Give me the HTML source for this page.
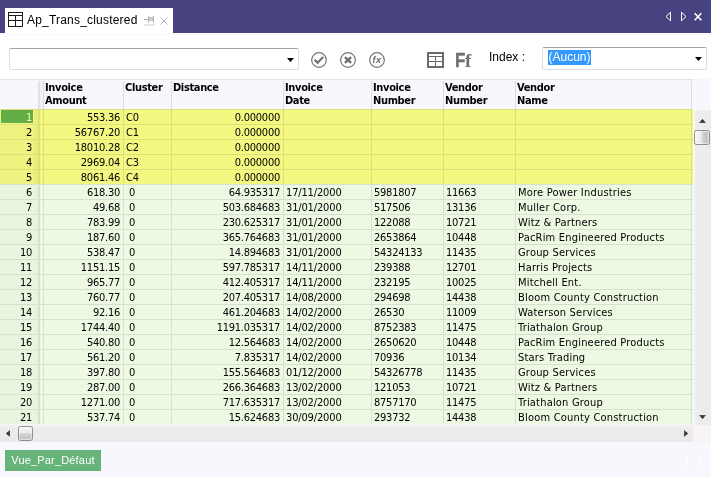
<!DOCTYPE html>
<html><head><meta charset="utf-8"><title>Ap_Trans_clustered</title>
<style>
html,body{margin:0;padding:0;}
body{will-change:transform;width:711px;height:477px;overflow:hidden;background:#fff;position:relative;font-family:"DejaVu Sans Condensed","DejaVu Sans","Liberation Sans",sans-serif;font-size:11px;color:#000;}
svg{position:absolute;overflow:visible;}
#top{position:absolute;left:0;top:0;width:711px;height:33px;background:#474381;}
#tab{position:absolute;left:5px;top:8px;width:168px;height:25px;background:#fff;}
#tab .t{will-change:transform;position:absolute;left:22px;top:5px;font:12px "Liberation Sans",sans-serif;color:#000;white-space:nowrap;letter-spacing:0.2px;}
#tline{position:absolute;left:0;top:34px;width:711px;height:1px;background:#f7f7fa;}
#combo{position:absolute;left:9px;top:48px;width:288px;height:20px;border:1px solid #dcdcea;border-top-color:#a4a4b0;border-radius:2px;background:#fff;}
#idx{position:absolute;left:489px;top:50px;font:12px "Liberation Sans",sans-serif;color:#000;white-space:nowrap;}
#sel{position:absolute;left:542px;top:47px;width:163px;height:21px;border:1px solid #dcdcea;border-top-color:#a4a4b0;border-radius:2px;background:#fff;}
#sel span{opacity:0.999;position:absolute;left:5px;top:2px;width:43px;background:#3399ff;color:#fff;font:12px "Liberation Sans",sans-serif;height:15px;line-height:15px;text-align:center;white-space:nowrap;}
#hdr{position:absolute;left:0;top:79px;width:711px;height:30px;background:#f7f7fe;border-top:1px solid #f7f7fe;}
#hline{position:absolute;left:0;top:79px;width:694px;height:1px;background:#e4e2e6;}
#hdr div{position:absolute;top:1px;height:29px;border-left:1px solid #dedce2;padding-left:1px;font-weight:bold;font-size:11px;line-height:13px;white-space:nowrap;letter-spacing:-0.35px;}
#grid{position:absolute;left:0;top:109px;width:693px;height:316px;overflow:hidden;border-top:1px solid #dbe07a;}
.r{position:relative;height:14px;border-bottom:1px solid;white-space:nowrap;line-height:16px;letter-spacing:-0.25px;}
.r.y{background:#f2f880;border-color:#dbe07a;}
.r.g{background:#edf9e3;border-color:#d6e2cd;}
.r.y.last{border-bottom-color:#d6e2cd;}
.r.g.end{border-bottom-color:#f6f6fa;}
.r span{position:absolute;top:0;height:14px;box-sizing:border-box;border-left:1px solid;overflow:hidden;}
.r.y span{border-color:#dbe07a;}
.r.g span{border-color:#d6e2cd;}
.r .n{left:0;width:34px;border-left:none;text-align:right;padding-right:2px;}
.r.y .n.sel{background:#62ad45;color:#f3f8a0;left:1px;width:32px;top:0px;height:13px;line-height:16px;padding-right:1px;}
.r .k{left:34px;width:4px;border-left:none;}
.r.y .k{background:#e8ee7c;}
.r.y .n{background:#eef380;}
.r.g .n{background:#e9f6df;}
.r.g .k{background:#e7f4dd;}
.r .s{left:38px;width:5px;border-left-width:2px;}
.r .c1{left:43px;width:80px;text-align:right;padding-right:3px;}
.r .c2{left:123px;width:48px;padding-left:2px;}
.r .c3{left:171px;width:112px;text-align:right;padding-right:3px;}
.r .c4{left:283px;width:88px;padding-left:2px;letter-spacing:-0.15px;}
.r .c5{left:371px;width:72px;padding-left:2px;}
.r .c6{left:443px;width:72px;padding-left:2px;}
.r .c7{left:515px;width:177px;padding-left:2px;letter-spacing:0.2px;border-right:1px solid;}
.r.g .c2{padding-left:5px;}
#vs{position:absolute;left:694px;top:110px;width:17px;height:315px;background:linear-gradient(90deg,#f4f4f4 0,#ececec 3px,#ededed 100%);}
#vgap{position:absolute;left:693px;top:109px;width:1px;height:316px;background:#fbfbfd;}
#vth{position:absolute;left:694px;top:130px;width:14px;height:13px;border:1px solid #8f8f8f;border-radius:2.5px;background:linear-gradient(90deg,#f5f5f5 0%,#eaeaea 45%,#d3d3d3 52%,#c4c4c4 85%,#d2d2d2 100%);box-shadow:inset 0 0 0 1px rgba(255,255,255,0.45);}
#hs{position:absolute;left:0;top:425px;width:693px;height:17px;background:linear-gradient(180deg,#f2f2f2 0,#ececec 4px,#ebebeb 100%);}
#hth{position:absolute;left:18px;top:426px;width:13px;height:13px;border:1px solid #8f8f8f;border-radius:2.5px;background:linear-gradient(180deg,#f5f5f5 0%,#eaeaea 45%,#d3d3d3 52%,#c4c4c4 85%,#d2d2d2 100%);box-shadow:inset 0 0 0 1px rgba(255,255,255,0.45);}
#corner{position:absolute;left:693px;top:425px;width:18px;height:17px;background:#f8f4f6;}
#bot{position:absolute;left:0;top:442px;width:711px;height:35px;background:#f7f7fe;}
#vue{position:absolute;left:5px;top:450px;width:96px;height:21px;background:#66b47a;color:#fff;font:11px "Liberation Sans",sans-serif;line-height:20px;text-align:center;white-space:nowrap;letter-spacing:0.17px;}
#vue span{opacity:0.999;display:inline-block;}
#ff{position:absolute;left:455px;top:49px;color:#716e71;white-space:nowrap;line-height:24px;height:24px;}
#ff b{font:bold 20px "Liberation Sans",sans-serif;display:inline-block;transform:scaleX(0.85);transform-origin:0 50%;-webkit-text-stroke:0.35px #716e71;}
#ff i{font:bold 19px "Liberation Serif",serif;font-style:normal;margin-left:-2.3px;}
</style></head><body>
<div id="top"><div id="tab">
<svg style="left:3px;top:4px" width="15" height="15" viewBox="0 0 15 15"><rect x="0.5" y="0.5" width="14" height="14" fill="#fff" stroke="#1e1e1e"/><path d="M0.5 3.5H14.5M0.5 8.5H14.5M7.5 3.5V14.5" stroke="#1e1e1e" fill="none"/></svg>
<span class="t">Ap_Trans_clustered</span>
<svg style="left:139px;top:8px" width="12" height="10" viewBox="0 0 12 10"><rect x="5" y="1" width="4" height="4" fill="#c9c9c9"/><path d="M0 3.5H4M4.5 0V7M9.5 0V7" stroke="#b4b4b4" fill="none"/><path d="M0 8.6L1 9.4L2 8.6L3 9.4L4 8.6L5 9.4L6 8.6L7 9.4L8 8.6L9 9.4L10 8.6L11 9.4" stroke="#c4c4c4" fill="none" stroke-width="0.9"/></svg>
<svg style="left:155px;top:9px" width="8" height="8" viewBox="0 0 8 8"><path d="M0.3 0.3L7.7 7.7M7.7 0.3L0.3 7.7" stroke="#bdbdbd" fill="none"/></svg>
</div>
<svg style="left:665px;top:11px" width="6" height="11" viewBox="0 0 6 11"><path d="M5.5 1.2V9.8L1 5.5Z" stroke="#fff" fill="none" stroke-width="1"/></svg>
<svg style="left:681px;top:11px" width="6" height="11" viewBox="0 0 6 11"><path d="M0.5 1.2V9.8L5 5.5Z" stroke="#fff" fill="none" stroke-width="1"/></svg>
<svg style="left:694px;top:13px" width="8" height="8" viewBox="0 0 8 8"><path d="M0.7 0.3L7.3 7.2M7.3 0.3L0.7 7.2" stroke="#fff" fill="none" stroke-width="1.6"/></svg>
</div>
<div id="tline"></div>
<div id="combo"><svg style="left:277px;top:9px" width="7" height="4" viewBox="0 0 7 4"><path d="M0 0H7L3.5 4Z" fill="#000"/></svg></div>
<svg style="left:311px;top:52px" width="16" height="16" viewBox="0 0 16 16"><circle cx="8" cy="8" r="7.35" fill="#fff" stroke="#757275" stroke-width="1.2"/><path d="M3.6 7.8L6.6 10.8L12.2 4.9" stroke="#6f6c6f" stroke-width="2.1" fill="none"/></svg>
<svg style="left:340px;top:52px" width="16" height="16" viewBox="0 0 16 16"><circle cx="8" cy="8" r="7.35" fill="#fff" stroke="#757275" stroke-width="1.2"/><path d="M4.9 5.1L11.1 10.9M11.1 5.1L4.9 10.9" stroke="#6f6c6f" stroke-width="2.3" fill="none"/></svg>
<svg style="left:369px;top:52px" width="16" height="16" viewBox="0 0 16 16"><circle cx="8" cy="8" r="7.35" fill="#fff" stroke="#757275" stroke-width="1.2"/><text x="7.9" y="11" text-anchor="middle" font-family="Liberation Sans, sans-serif" font-style="italic" font-weight="bold" font-size="9" letter-spacing="0.3" fill="#6a676a">fx</text></svg>
<svg style="left:427px;top:52px" width="17" height="16" viewBox="0 0 17 16"><rect x="1" y="1" width="15" height="14" fill="#fff" stroke="#6c696c" stroke-width="2"/><path d="M1 4.5H16M1 9.5H16M8.5 4.5V15" stroke="#6c696c" stroke-width="1" fill="none"/></svg>
<div id="ff"><b>F</b><i>f</i></div>
<div id="idx">Index :</div>
<div id="sel"><span>(Aucun)</span><svg style="left:152px;top:9px" width="7" height="4" viewBox="0 0 7 4"><path d="M0 0H7L3.5 4Z" fill="#000"/></svg></div>
<div id="hdr">
<div style="left:38px;width:4px;padding:0;background:#f1f0f7;border-left:2px solid #e4e1e6"></div>
<div style="left:43px">Invoice<br>Amount</div>
<div style="left:123px">Cluster</div>
<div style="left:171px">Distance</div>
<div style="left:283px">Invoice<br>Date</div>
<div style="left:371px">Invoice<br>Number</div>
<div style="left:443px">Vendor<br>Number</div>
<div style="left:515px">Vendor<br>Name</div>
<div style="left:691px;padding:0"></div>
</div>
<div id="hline"></div>
<div id="grid">
<div class="r y"><span class="n sel">1</span><span class="k"></span><span class="s"></span><span class="c1">553.36</span><span class="c2">C0</span><span class="c3">0.000000</span><span class="c4"></span><span class="c5"></span><span class="c6"></span><span class="c7"></span></div>
<div class="r y"><span class="n">2</span><span class="k"></span><span class="s"></span><span class="c1">56767.20</span><span class="c2">C1</span><span class="c3">0.000000</span><span class="c4"></span><span class="c5"></span><span class="c6"></span><span class="c7"></span></div>
<div class="r y"><span class="n">3</span><span class="k"></span><span class="s"></span><span class="c1">18010.28</span><span class="c2">C2</span><span class="c3">0.000000</span><span class="c4"></span><span class="c5"></span><span class="c6"></span><span class="c7"></span></div>
<div class="r y"><span class="n">4</span><span class="k"></span><span class="s"></span><span class="c1">2969.04</span><span class="c2">C3</span><span class="c3">0.000000</span><span class="c4"></span><span class="c5"></span><span class="c6"></span><span class="c7"></span></div>
<div class="r y last"><span class="n">5</span><span class="k"></span><span class="s"></span><span class="c1">8061.46</span><span class="c2">C4</span><span class="c3">0.000000</span><span class="c4"></span><span class="c5"></span><span class="c6"></span><span class="c7"></span></div>
<div class="r g"><span class="n">6</span><span class="k"></span><span class="s"></span><span class="c1">618.30</span><span class="c2">0</span><span class="c3">64.935317</span><span class="c4">17/11/2000</span><span class="c5">5981807</span><span class="c6">11663</span><span class="c7">More Power Industries</span></div>
<div class="r g"><span class="n">7</span><span class="k"></span><span class="s"></span><span class="c1">49.68</span><span class="c2">0</span><span class="c3">503.684683</span><span class="c4">31/01/2000</span><span class="c5">517506</span><span class="c6">13136</span><span class="c7">Muller Corp.</span></div>
<div class="r g"><span class="n">8</span><span class="k"></span><span class="s"></span><span class="c1">783.99</span><span class="c2">0</span><span class="c3">230.625317</span><span class="c4">31/01/2000</span><span class="c5">122088</span><span class="c6">10721</span><span class="c7">Witz &amp; Partners</span></div>
<div class="r g"><span class="n">9</span><span class="k"></span><span class="s"></span><span class="c1">187.60</span><span class="c2">0</span><span class="c3">365.764683</span><span class="c4">31/01/2000</span><span class="c5">2653864</span><span class="c6">10448</span><span class="c7">PacRim Engineered Products</span></div>
<div class="r g"><span class="n">10</span><span class="k"></span><span class="s"></span><span class="c1">538.47</span><span class="c2">0</span><span class="c3">14.894683</span><span class="c4">31/01/2000</span><span class="c5">54324133</span><span class="c6">11435</span><span class="c7">Group Services</span></div>
<div class="r g"><span class="n">11</span><span class="k"></span><span class="s"></span><span class="c1">1151.15</span><span class="c2">0</span><span class="c3">597.785317</span><span class="c4">14/11/2000</span><span class="c5">239388</span><span class="c6">12701</span><span class="c7">Harris Projects</span></div>
<div class="r g"><span class="n">12</span><span class="k"></span><span class="s"></span><span class="c1">965.77</span><span class="c2">0</span><span class="c3">412.405317</span><span class="c4">14/11/2000</span><span class="c5">232195</span><span class="c6">10025</span><span class="c7">Mitchell Ent.</span></div>
<div class="r g"><span class="n">13</span><span class="k"></span><span class="s"></span><span class="c1">760.77</span><span class="c2">0</span><span class="c3">207.405317</span><span class="c4">14/08/2000</span><span class="c5">294698</span><span class="c6">14438</span><span class="c7">Bloom County Construction</span></div>
<div class="r g"><span class="n">14</span><span class="k"></span><span class="s"></span><span class="c1">92.16</span><span class="c2">0</span><span class="c3">461.204683</span><span class="c4">14/02/2000</span><span class="c5">26530</span><span class="c6">11009</span><span class="c7">Waterson Services</span></div>
<div class="r g"><span class="n">15</span><span class="k"></span><span class="s"></span><span class="c1">1744.40</span><span class="c2">0</span><span class="c3">1191.035317</span><span class="c4">14/02/2000</span><span class="c5">8752383</span><span class="c6">11475</span><span class="c7">Triathalon Group</span></div>
<div class="r g"><span class="n">16</span><span class="k"></span><span class="s"></span><span class="c1">540.80</span><span class="c2">0</span><span class="c3">12.564683</span><span class="c4">14/02/2000</span><span class="c5">2650620</span><span class="c6">10448</span><span class="c7">PacRim Engineered Products</span></div>
<div class="r g"><span class="n">17</span><span class="k"></span><span class="s"></span><span class="c1">561.20</span><span class="c2">0</span><span class="c3">7.835317</span><span class="c4">14/02/2000</span><span class="c5">70936</span><span class="c6">10134</span><span class="c7">Stars Trading</span></div>
<div class="r g"><span class="n">18</span><span class="k"></span><span class="s"></span><span class="c1">397.80</span><span class="c2">0</span><span class="c3">155.564683</span><span class="c4">01/12/2000</span><span class="c5">54326778</span><span class="c6">11435</span><span class="c7">Group Services</span></div>
<div class="r g"><span class="n">19</span><span class="k"></span><span class="s"></span><span class="c1">287.00</span><span class="c2">0</span><span class="c3">266.364683</span><span class="c4">13/02/2000</span><span class="c5">121053</span><span class="c6">10721</span><span class="c7">Witz &amp; Partners</span></div>
<div class="r g"><span class="n">20</span><span class="k"></span><span class="s"></span><span class="c1">1271.00</span><span class="c2">0</span><span class="c3">717.635317</span><span class="c4">13/02/2000</span><span class="c5">8757170</span><span class="c6">11475</span><span class="c7">Triathalon Group</span></div>
<div class="r g end"><span class="n">21</span><span class="k"></span><span class="s"></span><span class="c1">537.74</span><span class="c2">0</span><span class="c3">15.624683</span><span class="c4">30/09/2000</span><span class="c5">293732</span><span class="c6">14438</span><span class="c7">Bloom County Construction</span></div>
</div>
<div id="vs">
<svg style="left:5px;top:9px" width="7" height="4" viewBox="0 0 7 4"><path d="M0 4H7L3.5 0Z" fill="url(#gc)"/></svg>
<svg style="left:5px;top:305px" width="7" height="4" viewBox="0 0 7 4"><path d="M0 0H7L3.5 4Z" fill="url(#gd)"/></svg>
</div>
<div id="vth"></div><div id="vgap"></div>
<div id="hs">
<svg style="left:6px;top:5px" width="4" height="7" viewBox="0 0 4 7"><defs><linearGradient id="ga" x1="0" x2="1" y1="0" y2="0"><stop offset="0" stop-color="#111"/><stop offset="1" stop-color="#555"/></linearGradient><linearGradient id="gb" x1="1" x2="0" y1="0" y2="0"><stop offset="0" stop-color="#111"/><stop offset="1" stop-color="#555"/></linearGradient><linearGradient id="gc" x1="0" x2="0" y1="0" y2="1"><stop offset="0" stop-color="#111"/><stop offset="1" stop-color="#555"/></linearGradient><linearGradient id="gd" x1="0" x2="0" y1="1" y2="0"><stop offset="0" stop-color="#111"/><stop offset="1" stop-color="#555"/></linearGradient></defs><path d="M4 0V7L0 3.5Z" fill="url(#ga)"/></svg>
<svg style="left:684px;top:5px" width="4" height="7" viewBox="0 0 4 7"><path d="M0 0V7L4 3.5Z" fill="url(#gb)"/></svg>
</div>
<div id="hth"></div>
<div id="corner"></div>
<div id="bot">
<svg style="left:683px;top:14px" width="5" height="9" viewBox="0 0 5 9"><path d="M4.5 0.5V8.5L0.5 4.5Z" stroke="#fff" fill="none"/></svg>
<svg style="left:698px;top:14px" width="5" height="9" viewBox="0 0 5 9"><path d="M0.5 0.5V8.5L4.5 4.5Z" stroke="#fff" fill="none"/></svg>
</div>
<div id="vue"><span>Vue_Par_Défaut</span></div>
</body></html>
